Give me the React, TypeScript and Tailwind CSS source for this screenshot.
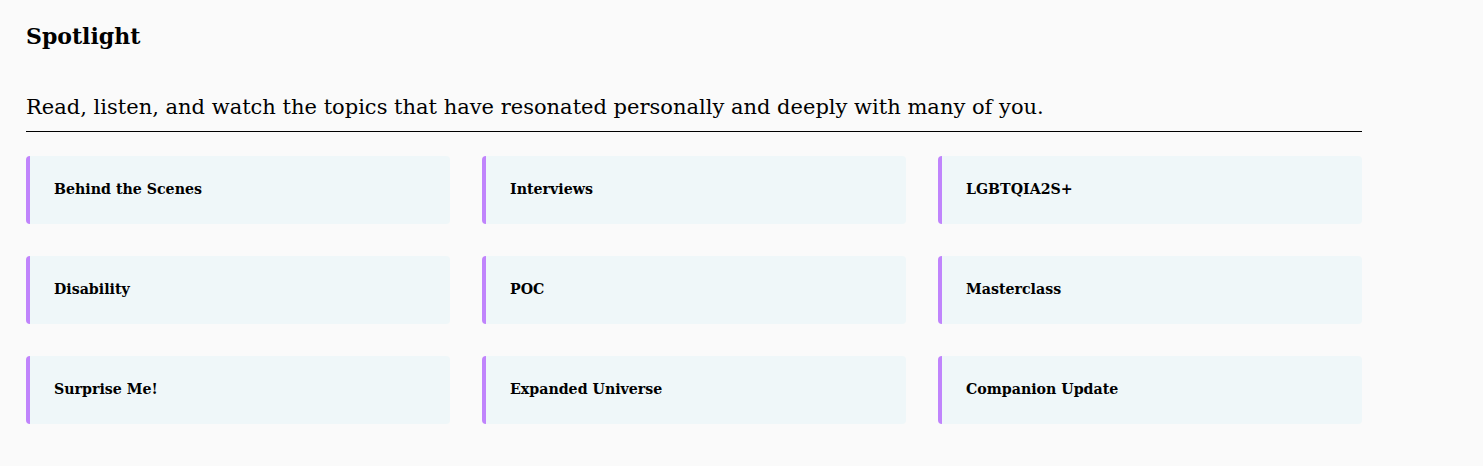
const topics = [
  'Behind the Scenes',
  'Interviews',
  'LGBTQIA2S+',
  'Disability',
  'POC',
  'Masterclass',
  'Surprise Me!',
  'Expanded Universe',
  'Companion Update',
];

export default function App() {
  return (
    <div className="min-h-[466px] bg-[#fafafa] text-black font-['DejaVu_Serif','Liberation_Serif',serif]">
      <section className="w-[1336px] ml-[26px] pt-[18px]">
        <h2 className="text-[22px] leading-[36px] font-bold">Spotlight</h2>
        <p className="mt-[38px] pb-[9px] text-[21px] leading-[30px] border-b border-black">
          Read, listen, and watch the topics that have resonated personally and deeply with many of you.
        </p>
        <div className="grid grid-cols-3 gap-x-8 gap-y-8 mt-6">
          {topics.map(t => (
            <a
              key={t}
              href="#"
              className="flex items-center h-[68px] pl-6 rounded border-l-4 border-[#c084fc] bg-[#eff7f9] text-[14.2px] font-bold"
            >
              {t}
            </a>
          ))}
        </div>
      </section>
    </div>
  );
}
